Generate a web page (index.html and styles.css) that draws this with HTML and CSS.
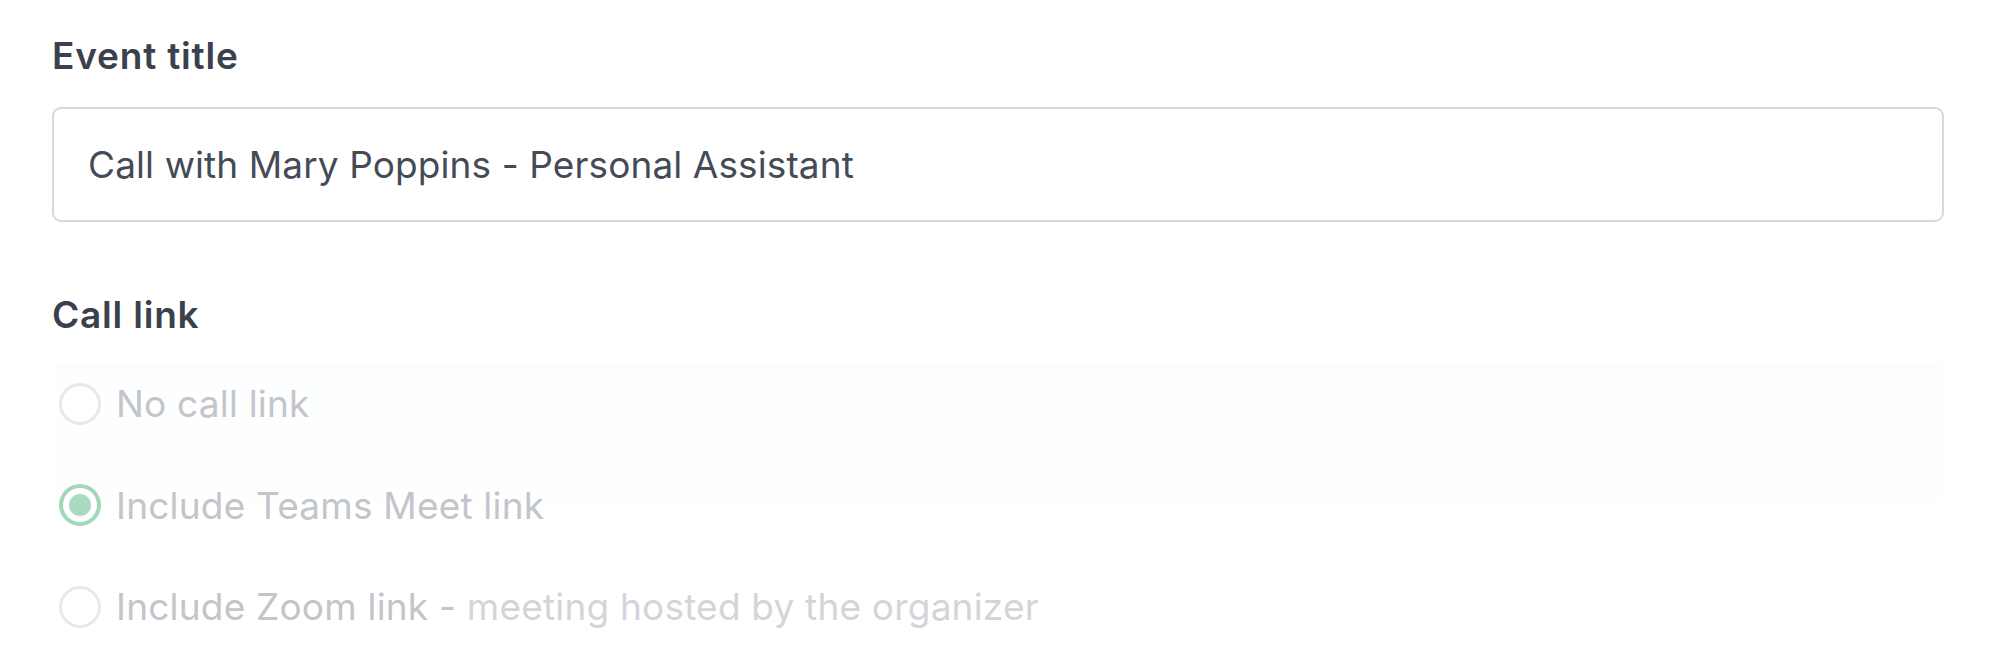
FILE: index.html
```html
<!DOCTYPE html>
<html lang="en">
<head>
  <meta charset="UTF-8">
  <meta name="viewport" content="width=device-width, initial-scale=1.0">
  <title>Event settings</title>
  <link rel="stylesheet" href="styles.css">
</head>
<body>
  <form class="event-form">
    <label class="field-label" for="eventTitle">Event title</label>
    <input class="text-input" type="text" id="eventTitle" value="Call with Mary Poppins - Personal Assistant">

    <div class="field-label call-label">Call link</div>
    <div class="radio-list">
      <label class="radio-row">
        <span class="radio"></span>
        <span class="radio-text">No call link</span>
      </label>
      <label class="radio-row">
        <span class="radio checked"></span>
        <span class="radio-text">Include Teams Meet link</span>
      </label>
      <label class="radio-row">
        <span class="radio"></span>
        <span class="radio-text">Include Zoom link - <span class="hint">meeting hosted by the organizer</span></span>
      </label>
    </div>
  </form>
</body>
</html>
```

FILE: styles.css
```css
body {
  margin: 0;
  background: #fff;
  font-family: Inter, 'Noto Sans', sans-serif;
}

.event-form {
  padding: 34px 50px 0 52px;
}

.field-label {
  display: block;
  font-size: 37px;
  line-height: 44px;
  font-weight: 600;
  letter-spacing: 0.8px;
  color: #3b414c;
}

.text-input {
  display: block;
  box-sizing: border-box;
  width: 100%;
  height: 115px;
  margin-top: 29px;
  padding: 0 34px;
  border: 2px solid #d4dae5;
  border-radius: 9px;
  font-family: inherit;
  font-size: 37px;
  letter-spacing: 0.1px;
  color: #444b57;
  outline: none;
}

.call-label {
  margin-top: 71px;
}

.radio-list {
  position: relative;
  margin-top: 16px;
}

.radio-list::before {
  content: "";
  position: absolute;
  left: 0;
  right: 0;
  top: 12px;
  height: 137px;
  border-radius: 10px;
  background: linear-gradient(180deg, #f6f9fc 0, #fdfeff 6px, #fefefe 100%);
  z-index: 0;
}

.radio-row {
  position: relative;
  display: flex;
  align-items: center;
  height: 101.5px;
  padding-left: 7px;
  gap: 15px;
}

.radio {
  box-sizing: border-box;
  width: 42px;
  height: 42px;
  border-radius: 50%;
  border: 3px solid #e6e8ec;
  background: #fff;
  flex-shrink: 0;
}

.radio.checked {
  border: 4px solid #a2d7ba;
  display: flex;
  align-items: center;
  justify-content: center;
}

.radio.checked::after {
  content: "";
  width: 22px;
  height: 22px;
  border-radius: 50%;
  background: #a8dbc0;
}

.radio-text {
  font-size: 37px;
  letter-spacing: 0.2px;
  color: #c2c5ca;
}

.hint {
  color: #d3d5d9;
}
```
